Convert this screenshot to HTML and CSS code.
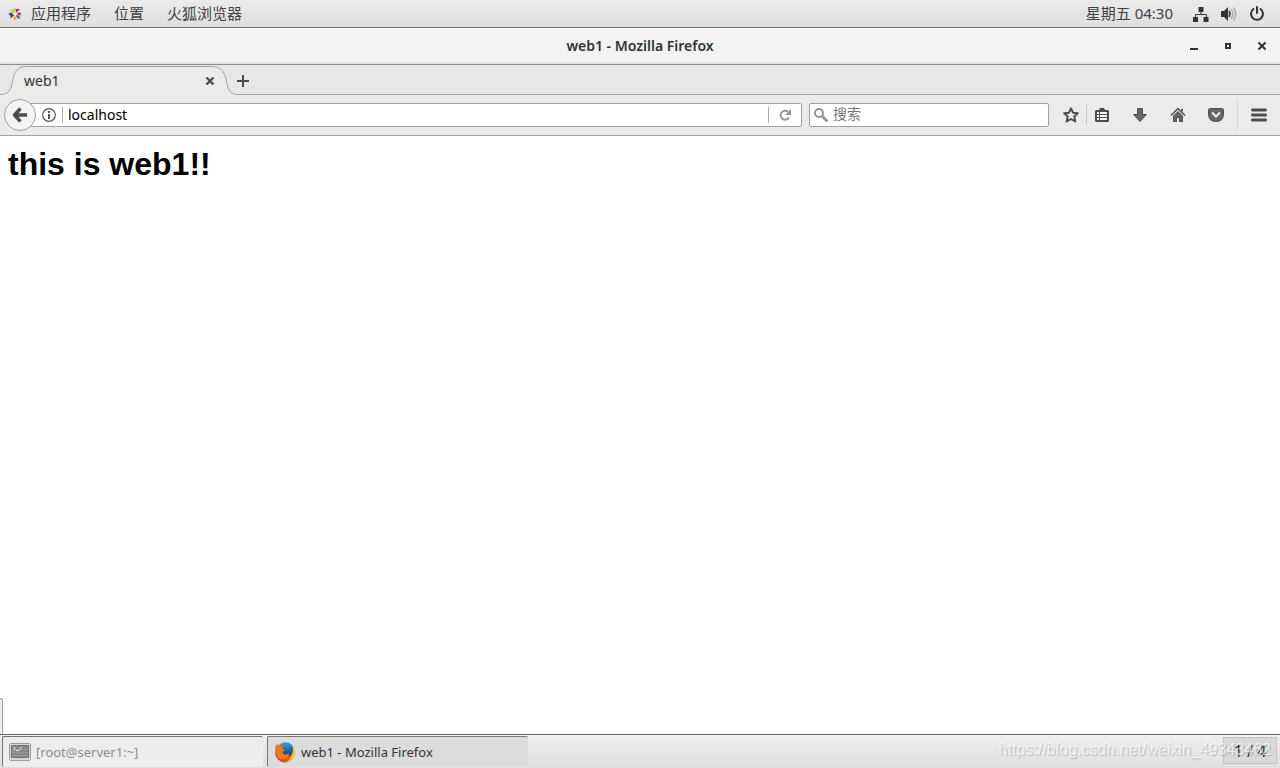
FILE: index.html
```html
<!DOCTYPE html>
<html lang="zh-CN">
<head>
<meta charset="utf-8">
<title>web1 - Mozilla Firefox</title>
<link rel="stylesheet" href="styles.css">
</head>
<body class="desktop">
<header class="panel">
  <nav class="panel-menu">
    <button class="panel-item apps" type="button">
      <svg class="distro" width="14" height="14" viewBox="0 0 14 14" aria-hidden="true">
        <path fill="#a9cf45" d="M2.500 2.500h4v4z"/><path fill="#b5d65c" d="M7 .5l2 2-2 3-2-3z"/>
        <path fill="#93337f" d="M8 2h4L8 6z"/><path fill="#a0458e" d="M13.500 7l-2 2-3-2 3-2z"/>
        <path fill="#e9a53a" d="M8 8l4 0v4z"/><path fill="#efb04a" d="M7 13.500l-2-2 2-3 2 3z"/>
        <path fill="#3b3a86" d="M2.500 11.500V8l4 0z"/><path fill="#6a3b93" d="M.5 7l2-2 3 2-3 2z"/>
        <path fill="#efb04a" d="M2 3l3 3H2z"/><path fill="#3b3a86" d="M9 8l3 3-1 1-3-3z"/>
      </svg>
      <span class="panel-text">应用程序</span>
    </button>
    <button class="panel-item panel-text" type="button">位置</button>
    <button class="panel-item panel-text" type="button">火狐浏览器</button>
  </nav>
  <div class="status">
    <button class="clock panel-text" type="button">星期五 04:30</button>
    <button class="status-icon" type="button" aria-label="网络">
      <svg width="16" height="16" viewBox="0 0 16 16"><path fill="#2e3436" d="M5.500 1h5v5h-5zM0 11h5v5H0zM10.500 11h5v5h-5z"/><path fill="none" stroke="#2e3436" d="M8 6v2.500M2.500 11V8.500h11V11"/></svg>
    </button>
    <button class="status-icon" type="button" aria-label="音量">
      <svg width="16" height="16" viewBox="0 0 16 16"><path fill="#2e3436" d="M0 5h3l4-4v14l-4-4H0z"/><path fill="none" stroke="#2e3436" stroke-width="1.500" d="M8 5q2 3 0 6"/><path fill="none" stroke="#a7a9aa" stroke-width="1.500" d="M10 3q4 5 0 10M12.500 1.500q4.500 6.500 0 13"/></svg>
    </button>
    <button class="status-icon" type="button" aria-label="电源">
      <svg width="16" height="16" viewBox="0 0 16 16"><path fill="none" stroke="#2e3436" stroke-width="2" stroke-linecap="round" d="M4.500 3a6 6 0 1 0 7 0M8 1v6"/></svg>
    </button>
  </div>
</header>

<main class="window">
  <div class="titlebar">
    <span class="window-title">web1 - Mozilla Firefox</span>
    <div class="window-buttons">
      <button type="button" aria-label="最小化"><svg width="10" height="10" viewBox="0 0 10 10"><path fill="#2e3436" d="M1 7h8v2H1z"/></svg></button>
      <button type="button" aria-label="最大化"><svg width="10" height="10" viewBox="0 0 10 10"><path fill="none" stroke="#2e3436" stroke-width="2" d="M3 3h4v4H3z"/></svg></button>
      <button type="button" aria-label="关闭"><svg width="10" height="10" viewBox="0 0 10 10"><path fill="none" stroke="#2e3436" stroke-width="2" d="M1.500 1.500l7 7M8.500 1.500l-7 7"/></svg></button>
    </div>
  </div>

  <div class="tabs">
    <div class="tab">
      <svg class="tab-shape" width="238" height="31" viewBox="0 0 238 31" aria-hidden="true"><path fill="#ebebea" d="M0 29.500C10 29.500 11 24 13 14C15 4 20 1.500 27 1.500H211C219 1.500 224 5 226 14C228 25 230 29.500 238 29.500V31H0z"/><path fill="none" stroke="#a0a5aa" d="M0 29.500C10 29.500 11 24 13 14C15 4 20 1.500 27 1.500H211C219 1.500 224 5 226 14C228 25 230 29.500 238 29.500"/></svg>
      <span class="tab-label">web1</span>
      <button class="tab-close" type="button" aria-label="关闭标签页"><svg width="10" height="10" viewBox="0 0 10 10"><path fill="none" stroke="#4c4c4c" stroke-width="2.400" d="M1.500 1.500l7 7M8.500 1.500l-7 7"/></svg></button>
    </div>
    <button class="new-tab" type="button" aria-label="新建标签页"><svg width="12" height="12" viewBox="0 0 12 12"><path fill="#4c4c4c" d="M5 0h2v5h5v2H7v5H5V7H0V5h5z"/></svg></button>
  </div>

  <div class="toolbar">
    <button class="back" type="button" aria-label="后退"><svg width="16" height="16" viewBox="0 0 16 16"><path fill="none" stroke="#4c4c4c" stroke-width="3.400" stroke-linejoin="round" d="M8.500 1.500L2.500 8l6 6.500M3 8h12"/></svg></button>
    <div class="address">
      <svg width="14" height="14" viewBox="0 0 14 14" aria-hidden="true"><circle cx="7" cy="7" r="6.300" fill="none" stroke="#555" stroke-width="1.200"/><path fill="#555" d="M6 3h2v2H6zM6 6h2v5H6z"/></svg>
      <span class="rule"></span>
      <input class="url" type="text" value="localhost" aria-label="地址">
      <span class="rule"></span>
      <button class="reload" type="button" aria-label="刷新"><svg width="12" height="12" viewBox="0 0 12 12"><path fill="none" stroke="#8a98a8" stroke-width="2" d="M9 2.700A4.500 4.500 0 1 0 10 8.500"/><path fill="#8a98a8" d="M12 0v6H6z"/></svg></button>
    </div>
    <div class="search">
      <svg width="14" height="14" viewBox="0 0 14 14" aria-hidden="true"><circle cx="5" cy="5" r="4" fill="none" stroke="#939393" stroke-width="2"/><path stroke="#939393" stroke-width="3" stroke-linecap="round" d="M9 9l3.500 3.500"/></svg>
      <input class="query" type="text" placeholder="搜索" aria-label="搜索">
    </div>
    <div class="tools">
      <button class="tool star" type="button" aria-label="加入书签"><svg width="16" height="16" viewBox="0 0 16 16"><path fill="none" stroke="#4c4c4c" stroke-width="2" stroke-linejoin="round" d="M8 1.300l2 4.400 4.800.5-3.500 3.300 1 5L8 12l-4.300 2.500 1-5L1.200 6.200 6 5.700z"/></svg></button>
      <button class="tool list" type="button" aria-label="书签"><svg width="16" height="16" viewBox="0 0 16 16"><path fill="#4c4c4c" d="M5 3l1-2h4l1 2h3l1 1v10l-1 1H2l-1-1V4l1-1z"/><path fill="#f1f1f0" d="M3 5h2v2H3zM6 5h7v2H6zM3 8h2v2H3zM6 8h7v2H6zM3 11h2v2H3zM6 11h7v2H6z"/></svg></button>
      <button class="tool" type="button" aria-label="下载"><svg width="16" height="16" viewBox="0 0 16 16"><path fill="#666" stroke="#4c4c4c" stroke-linejoin="round" d="M5.500 1.500h5v6h4L8 14.500 1.500 7.500h4z"/></svg></button>
      <button class="tool" type="button" aria-label="主页"><svg width="16" height="16" viewBox="0 0 16 16"><path fill="none" stroke="#4c4c4c" stroke-width="1.500" d="M1 8.500l7-7 7 7"/><path fill="#4c4c4c" d="M11 2h2v3l-2-2z"/><path fill="#666" stroke="#4c4c4c" d="M3.500 9L8 4.500 12.500 9v5.500h-3v-4h-3v4h-3z"/></svg></button>
      <button class="tool" type="button" aria-label="Pocket"><svg width="16" height="16" viewBox="0 0 16 16"><path fill="#666" stroke="#4c4c4c" d="M.5 2.500l1-1h13l1 1V7q0 7.500-7.500 7.500T.5 7z"/><path fill="none" stroke="#f1f1f0" stroke-width="2" d="M4 5.500l4 4 4-4"/></svg></button>
      <button class="tool menu" type="button" aria-label="菜单"><svg width="16" height="16" viewBox="0 0 16 16"><path stroke="#4c4c4c" stroke-width="2.800" stroke-linecap="round" d="M1.400 3h13.200M1.400 8h13.200M1.400 13h13.200"/></svg></button>
    </div>
  </div>

  <article class="page">
    <h1 class="page-heading">this is web1!!</h1>
    <span class="edge-tray"></span>
  </article>
</main>

<footer class="taskbar">
  <button class="task minimized" type="button">
    <svg width="22" height="20" viewBox="0 0 22 20" aria-hidden="true"><rect x=".5" y="1.500" width="21" height="17" rx="1" fill="#d6d6d5" stroke="#9a9c9a"/><path fill="#858b89" stroke="#6f7573" d="M2.500 3.500h17v12h-17z"/><path stroke="#959a98" d="M3 7.500h16M3 10.500h16M3 13.500h16"/><path fill="none" stroke="#e8e8e8" d="M4.500 5l2 1.500-2 1.500M7 8.500h3M10.500 8l2-3"/></svg>
    <span>[root@server1:~]</span>
  </button>
  <button class="task active" type="button">
    <svg width="22" height="22" viewBox="0 0 22 22" aria-hidden="true">
      <defs><linearGradient id="fox" x1="0" y1="1" x2="1" y2="0"><stop offset="0" stop-color="#c9301c"/><stop offset=".5" stop-color="#ea641b"/><stop offset="1" stop-color="#fbd43b"/></linearGradient><linearGradient id="globe" x2="0" y2="1"><stop stop-color="#38a4dc"/><stop offset="1" stop-color="#123570"/></linearGradient></defs>
      <circle cx="11" cy="11.500" r="10" fill="url(#fox)"/>
      <circle cx="12" cy="8.500" r="7.300" fill="url(#globe)"/>
      <path fill="#ee7a20" d="M1 9q0-4 2-6l2.500 2.500q2-1 4-.5L8 7.500 11 9l-2.500 2 .5 1.500q3 2 6-.5 0 4-4 6-6 1-8-3-2-3-2-6z"/>
      <path fill="#fbc52d" d="M18.500 4q4 5 2 11-3 6-9 6.500 6-3.500 7-8.500 1-5 0-9z"/>
    </svg>
    <span>web1 - Mozilla Firefox</span>
  </button>
  <button class="workspace" type="button">1 / 4</button>
  <span class="watermark">https://blog.csdn.net/weixin_49343462</span>
</footer>
</body>
</html>
```
FILE: styles.css
```css
* { box-sizing: border-box; }

button, input {
  margin: 0;
  padding: 0;
  border: 0;
  background: none;
  color: inherit;
  font: inherit;
}

button {
  display: flex;
  align-items: center;
  justify-content: center;
}

svg { display: block; flex: none; }

.desktop {
  display: flex;
  flex-direction: column;
  min-height: 100vh;
  margin: 0;
  background: #fff;
  color: #2e3436;
  font: 14px/20px "Noto Sans", "Noto Sans CJK SC", sans-serif;
}

.panel {
  display: flex;
  justify-content: space-between;
  height: 28px;
  padding: 0 15px 0 8px;
  border-bottom: 1px solid #686868;
  background: linear-gradient(#ebebeb, #dfdfdf);
  font-size: 15px;
}

.panel-text { padding-bottom: 2px; color: #3c4244; }
.panel-menu, .status { display: flex; align-items: center; }
.panel-menu { gap: 23px; }
.apps { gap: 9px; }
.status { gap: 12px; }
.clock { margin-right: 8px; }

.window { display: flex; flex: 1; flex-direction: column; }

.titlebar {
  display: grid;
  grid-template-columns: 1fr auto 1fr;
  align-items: center;
  height: 37px;
  border-bottom: 1px solid #8f908e;
  background: #f3f3f3;
  box-shadow: inset 0 1px #fff, inset 0 -2px #e6e6e6;
}

.window-title { grid-column: 2; font-weight: 600; }

.window-buttons {
  display: flex;
  justify-content: flex-end;
  gap: 24px;
  padding-right: 13px;
}

.tabs {
  display: flex;
  height: 30px;
  background: #e7e7e5;
  box-shadow: inset 0 -1px #a0a3a3;
}

.tab {
  position: relative;
  display: flex;
  align-items: center;
  justify-content: space-between;
  width: 238px;
  padding: 2px 23px 0 24px;
}

.tab-shape { position: absolute; top: 0; left: 0; }
.tab-label, .tab-close { position: relative; }
.new-tab { width: 12px; margin-left: -1px; padding-top: 2px; }

.toolbar {
  display: flex;
  align-items: center;
  height: 41px;
  padding: 0 13px 0 4px;
  border-bottom: 1px solid #a0a0a0;
  background: #ebebea;
}

.back {
  z-index: 1;
  width: 32px;
  height: 32px;
  border: 1px solid #a0a0a0;
  border-radius: 50%;
  background: #f4f4f4;
}

.address, .search {
  display: flex;
  align-items: center;
  height: 24px;
  border: 1px solid #a0a0a0;
  border-radius: 2px;
  background: #fff;
  color: #000;
}

.address {
  flex: 1;
  gap: 6px;
  margin-left: -8px;
  padding: 0 6px 0 13px;
}

.url { flex: 1; min-width: 0; margin-left: -1px; outline: 0; }
.rule { width: 1px; height: 16px; background: #aaa; }
.reload { width: 20px; }

.search {
  width: 240px;
  margin-left: 7px;
  padding: 0 4px;
  gap: 5px;
}

.query { width: 100%; min-width: 0; padding-bottom: 2px; outline: 0; }
.query::placeholder { color: #777; opacity: 1; }

.tools { display: flex; align-items: center; gap: 22px; margin-left: 14px; }
.star { margin-right: -15px; }

.list {
  height: 20px;
  padding-left: 7px;
  border-left: 1px solid #c6c6c6;
}

.menu {
  height: 32px;
  margin-left: -9px;
  padding-left: 13px;
  border-left: 1px solid #d8d8d8;
}

.page {
  position: relative;
  flex: 1;
  padding: 8px;
  background: #fff;
}

.page-heading {
  margin: 0;
  color: #000;
  font: bold 32px/40px "Liberation Sans", sans-serif;
}

.edge-tray {
  position: absolute;
  bottom: 0;
  left: 0;
  width: 3px;
  height: 36px;
  border: solid #a0a0a0;
  border-width: 1px 1px 0 0;
  border-radius: 0 3px 0 0;
  background: #eee;
}

.taskbar {
  position: relative;
  display: flex;
  gap: 4px;
  height: 34px;
  padding: 1px 3px 1px 2px;
  border-top: 1px solid #686868;
  background: linear-gradient(#eee, #dfdfdf);
  font-size: 13px;
}

.task {
  flex: 0 1 261px;
  justify-content: flex-start;
  gap: 5px;
  padding-left: 6px;
  border: solid #777;
  border-width: 1px 0 0 1px;
  border-radius: 2px;
}

.minimized { background: #ededed; color: #8b8d8e; }
.active { background: #dcdcdc; }

.workspace {
  width: 54px;
  height: 27px;
  margin: 1px 0 0 auto;
  border: 1px solid #c3c3c3;
  background: #d9d9d9;
  font-size: 16px;
}

.watermark {
  position: absolute;
  top: 5px;
  right: 9px;
  color: rgba(255, 255, 255, 0.7);
  font: 16px/20px "Liberation Sans", sans-serif;
  text-shadow: 1px 1px 1px rgba(0, 0, 0, 0.2);
  pointer-events: none;
}
```
